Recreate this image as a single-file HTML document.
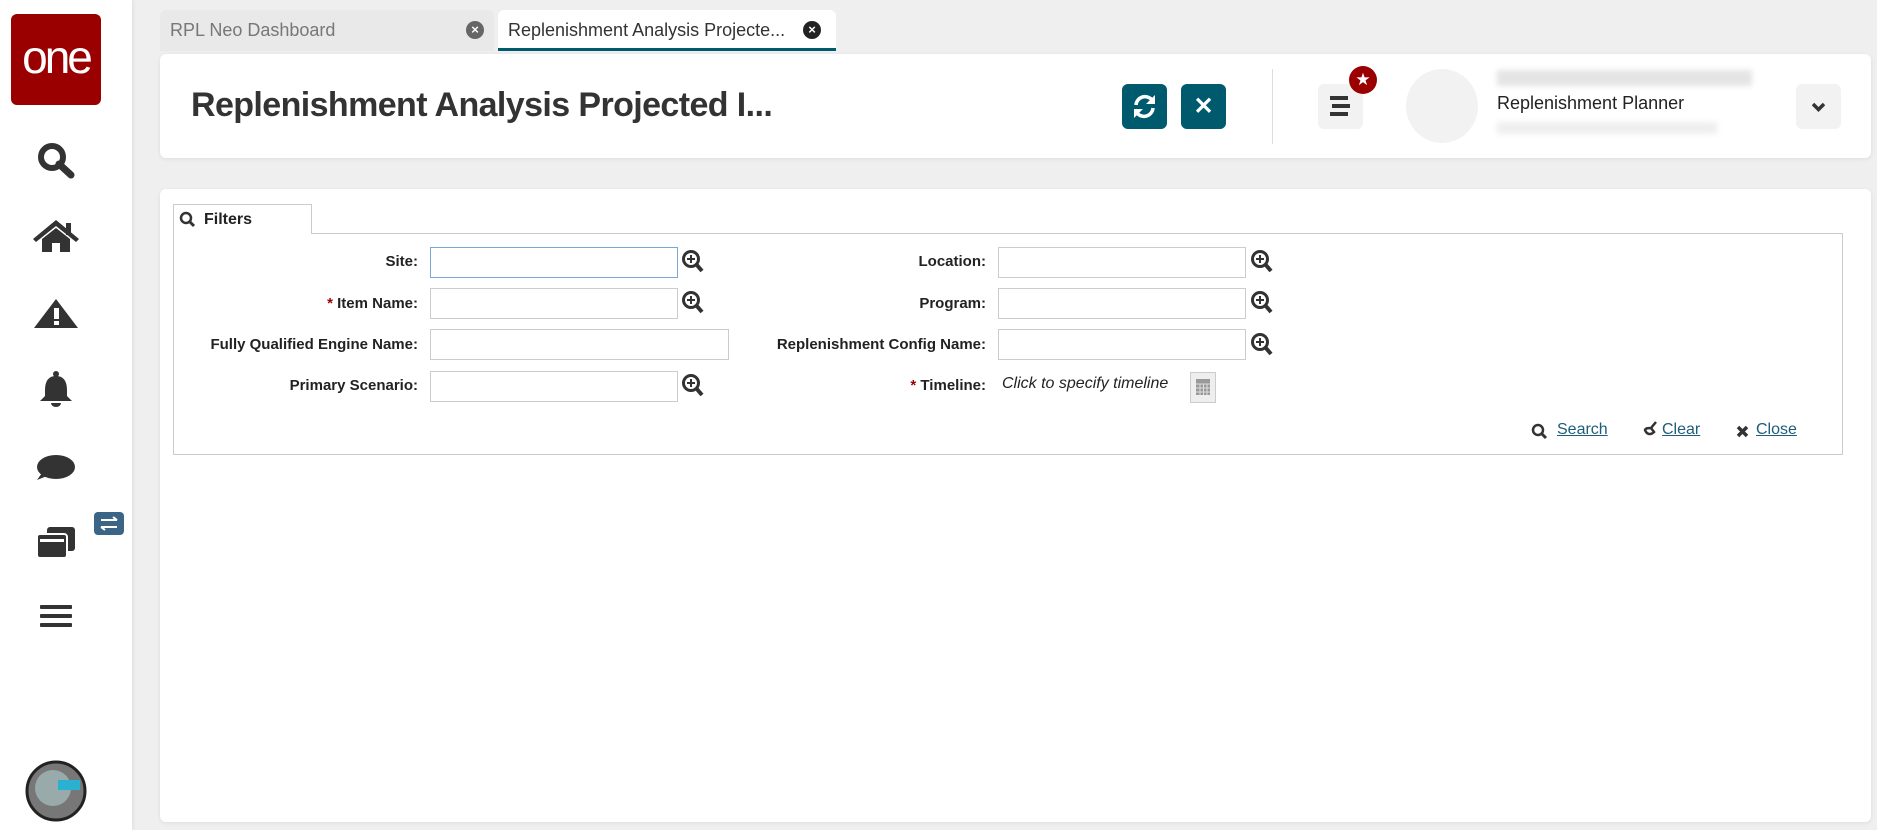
<!DOCTYPE html>
<html><head><meta charset="utf-8"><style>
*{box-sizing:border-box;margin:0;padding:0}
body{width:1877px;height:830px;background:#efefef;font-family:"Liberation Sans",sans-serif;position:relative;overflow:hidden;color:#222}
.abs{position:absolute}
.side{left:0;top:0;width:132px;height:830px;background:#fff;box-shadow:1px 0 4px rgba(0,0,0,.08)}
.logo{left:11px;top:14px;width:90px;height:91px;background:#9b0000;border-radius:6px;color:#fff;font-size:46px;text-align:center;line-height:86px;letter-spacing:-3px}
.tab{top:10px;height:41px;border-radius:6px 6px 0 0;font-size:18px;line-height:41px;padding-left:10px;color:#777}
.card{background:#fff;border-radius:6px;box-shadow:0 1px 4px rgba(0,0,0,.08)}
.btn{width:45px;height:45px;border-radius:6px;background:#005a6e;top:84px}
.gbtn{width:45px;height:45px;border-radius:6px;background:#f2f2f2;top:84px}
.lbl{font-size:15px;font-weight:bold;text-align:right;width:300px;line-height:20px}
.inp{height:31px;border:1px solid #ccc;background:#fff}
.lnk{font-size:16px;color:#1d5d7a;text-decoration:underline;top:421px}
.req{color:#9b0000}
</style></head><body>
<div class="abs side"></div>
<div class="abs logo">one</div>
<svg class="abs" style="left:0;top:130px" width="132" height="700" viewBox="0 0 132 700">
<g fill="#333">
<g transform="translate(0,4)"><circle cx="52" cy="23" r="11" fill="none" stroke="#333" stroke-width="6"/><path d="M59 30l12 11" stroke="#333" stroke-width="7" stroke-linecap="round"/></g>
<g transform="translate(0,29)"><path d="M33 80l23-19 23 19-3 3-20-16-20 16z"/><path d="M42 80l14-11 14 11v13H60v-9h-8v9H42z"/><rect x="66" y="64" width="5" height="12"/></g>
<g transform="translate(0,49)"><path d="M56 120l22 29H34z"/><rect x="54" y="129" width="5" height="11" fill="#fff"/><rect x="54" y="142" width="5" height="4" fill="#fff"/></g>
<g transform="translate(0,66)"><path d="M56 180c-8 0-11 6-11 14v6l-5 5h32l-5-5v-6c0-8-3-14-11-14z"/><circle cx="56" cy="178" r="3"/><path d="M51 207a5 4 0 0 0 10 0z"/></g>
<g transform="translate(0,85)"><ellipse cx="56" cy="252" rx="19" ry="12"/><path d="M42 258l-5 7 10-4z"/></g>
<g transform="translate(0,104)"><rect x="47" y="293" width="28" height="24" rx="3"/><rect x="37" y="300" width="30" height="24" rx="3" stroke="#fff" stroke-width="2"/><rect x="40" y="305" width="24" height="3" fill="#fff"/></g>
<g transform="translate(0,122)"><rect x="40" y="353" width="32" height="4" rx="1"/><rect x="40" y="362" width="32" height="4" rx="1"/><rect x="40" y="371" width="32" height="4" rx="1"/></g>
</g>
<g transform="translate(0,98)"><rect x="94" y="284" width="30" height="23" rx="4" fill="#3a6587"/><path d="M101 292h16m-4-3l4 3M117 299h-16m4 3l-4-3" stroke="#fff" stroke-width="2" fill="none"/></g>
<circle cx="56" cy="661" r="29" fill="#777" stroke="#222" stroke-width="3"/><circle cx="53" cy="658" r="18" fill="#9aa"/><rect x="58" y="650" width="22" height="10" fill="#2ab0d0"/>
</svg>
<div class="abs tab" style="left:160px;width:334px;background:#e9e9e9">RPL Neo Dashboard</div>
<div class="abs" style="left:466px;top:21px;width:18px;height:18px;border-radius:50%;background:#666;color:#fff;font-size:13px;font-weight:bold;text-align:center;line-height:18px">×</div>
<div class="abs tab" style="left:498px;width:338px;background:#fff;color:#333;border-bottom:3px solid #005a6e">Replenishment Analysis Projecte...</div>
<div class="abs" style="left:803px;top:21px;width:18px;height:18px;border-radius:50%;background:#222;color:#fff;font-size:13px;font-weight:bold;text-align:center;line-height:18px">×</div>
<div class="abs card" style="left:160px;top:54px;width:1711px;height:104px"></div>
<div class="abs" style="left:191px;top:86px;font-size:34px;font-weight:bold;color:#333;letter-spacing:-.6px">Replenishment Analysis Projected I...</div>
<div class="abs btn" style="left:1122px"></div>
<svg class="abs" style="left:1122px;top:84px" width="45" height="45"><g fill="none" stroke="#fff" stroke-width="3.5"><path d="M14 21a9 9 0 0 1 16-5"/><path d="M31 24a9 9 0 0 1-16 5"/></g><path d="M33 11v9h-9z M12 34v-9h9z" fill="#fff"/></svg>
<div class="abs btn" style="left:1181px;color:#fff;font-weight:bold;font-size:24px;text-align:center;line-height:45px">✕</div>
<div class="abs" style="left:1272px;top:69px;width:1px;height:75px;background:#ddd"></div>
<div class="abs gbtn" style="left:1318px"></div>
<div class="abs" style="left:1330px;top:96px;width:18px;height:4px;background:#333;box-shadow:2px 8px 0 #333,0 16px 0 #333"></div>
<div class="abs" style="left:1349px;top:66px;width:28px;height:28px;border-radius:50%;background:#9b0000;color:#fff;font-size:17px;text-align:center;line-height:28px">★</div>
<div class="abs" style="left:1406px;top:69px;width:72px;height:74px;border-radius:50%;background:#f2f2f2"></div>
<div class="abs" style="left:1497px;top:70px;width:255px;height:16px;background:#e4e4e4;filter:blur(3px)"></div>
<div class="abs" style="left:1497px;top:93px;font-size:18px;color:#222">Replenishment Planner</div>
<div class="abs" style="left:1497px;top:122px;width:220px;height:12px;background:#eee;filter:blur(3px)"></div>
<div class="abs gbtn" style="left:1796px"></div>
<svg class="abs" style="left:1796px;top:84px" width="45" height="45"><path d="M17 20l5.5 5.5L28 20" stroke="#333" stroke-width="3.5" fill="none"/></svg>
<div class="abs card" style="left:160px;top:189px;width:1711px;height:633px"></div>
<div class="abs" style="left:173px;top:233px;width:1670px;height:222px;border:1px solid #ccc"></div>
<div class="abs" style="left:173px;top:204px;width:139px;height:30px;border:1px solid #ccc;border-bottom:none;background:#fff;font-size:16px;font-weight:bold;line-height:30px;padding-left:30px">Filters</div>
<svg class="abs" style="left:178px;top:210px" width="20" height="20"><circle cx="8" cy="8" r="5" fill="none" stroke="#333" stroke-width="2.5"/><path d="M12 12l4 4" stroke="#333" stroke-width="3"/></svg>

<div class="abs lbl" style="left:118px;top:252px">Site:</div>
<div class="abs lbl" style="left:118px;top:294px"><span class="req">*</span> Item Name:</div>
<div class="abs lbl" style="left:118px;top:335px">Fully Qualified Engine Name:</div>
<div class="abs lbl" style="left:118px;top:376px">Primary Scenario:</div>
<div class="abs inp" style="left:430px;top:247px;width:248px;border-color:#7aa7d6"></div>
<div class="abs inp" style="left:430px;top:288px;width:248px"></div>
<div class="abs inp" style="left:430px;top:329px;width:299px"></div>
<div class="abs inp" style="left:430px;top:371px;width:248px"></div>

<div class="abs lbl" style="left:686px;top:252px">Location:</div>
<div class="abs lbl" style="left:686px;top:294px">Program:</div>
<div class="abs lbl" style="left:686px;top:335px">Replenishment Config Name:</div>
<div class="abs lbl" style="left:686px;top:376px"><span class="req">*</span> Timeline:</div>
<div class="abs inp" style="left:998px;top:247px;width:248px"></div>
<div class="abs inp" style="left:998px;top:288px;width:248px"></div>
<div class="abs inp" style="left:998px;top:329px;width:248px"></div>
<div class="abs" style="left:1002px;top:375px;font-size:16px;font-style:italic;color:#222">Click to specify timeline</div>
<div class="abs" style="left:1190px;top:372px;width:26px;height:31px;background:#eee;border:1px solid #ccc"></div>
<svg class="abs" style="left:1193px;top:375px" width="20" height="24"><rect x="3" y="4" width="14" height="16" fill="#999"/><path d="M3 9h14M3 13h14M3 17h14M7 9v11M10.5 9v11M14 9v11" stroke="#ddd"/></svg>

<svg class="abs" style="left:0;top:0" width="1877" height="830">
<g fill="none" stroke="#333">
<g transform="translate(693,262)"><circle cx="-2" cy="-3" r="7.5" stroke-width="3"/><path d="M3 2l6 7" stroke-width="4"/><path d="M-6-3h8M-2-7v8" stroke-width="2"/></g>
<g transform="translate(693,303)"><circle cx="-2" cy="-3" r="7.5" stroke-width="3"/><path d="M3 2l6 7" stroke-width="4"/><path d="M-6-3h8M-2-7v8" stroke-width="2"/></g>
<g transform="translate(693,386)"><circle cx="-2" cy="-3" r="7.5" stroke-width="3"/><path d="M3 2l6 7" stroke-width="4"/><path d="M-6-3h8M-2-7v8" stroke-width="2"/></g>
<g transform="translate(1262,262)"><circle cx="-2" cy="-3" r="7.5" stroke-width="3"/><path d="M3 2l6 7" stroke-width="4"/><path d="M-6-3h8M-2-7v8" stroke-width="2"/></g>
<g transform="translate(1262,303)"><circle cx="-2" cy="-3" r="7.5" stroke-width="3"/><path d="M3 2l6 7" stroke-width="4"/><path d="M-6-3h8M-2-7v8" stroke-width="2"/></g>
<g transform="translate(1262,345)"><circle cx="-2" cy="-3" r="7.5" stroke-width="3"/><path d="M3 2l6 7" stroke-width="4"/><path d="M-6-3h8M-2-7v8" stroke-width="2"/></g>
<circle cx="1538" cy="430" r="5" stroke-width="2.5"/><path d="M1542 434l4 4" stroke-width="3"/>
<path d="M1656 422l-5 6M1645 430c2 5 6 5 9 2l-3-4c-3 0-5 0-6 2z" stroke-width="2.5"/>
<path d="M1738 427l9 9M1747 427l-9 9" stroke-width="3.5"/>
</g></svg>
<div class="abs lnk" style="left:1557px">Search</div>
<div class="abs lnk" style="left:1662px">Clear</div>
<div class="abs lnk" style="left:1756px">Close</div>
</body></html>
